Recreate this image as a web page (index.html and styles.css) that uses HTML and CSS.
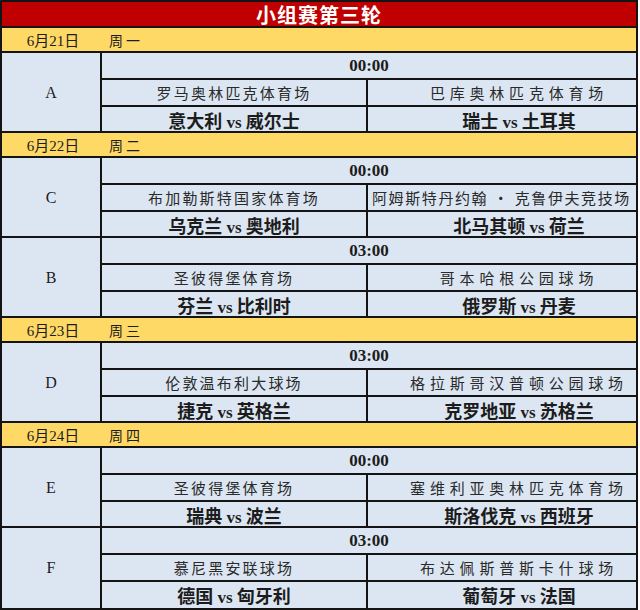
FILE: index.html
```html
<!DOCTYPE html>
<html lang="zh">
<head>
<meta charset="utf-8">
<link rel="stylesheet" href="styles.css">
</head>
<body>
<div class="sheet">
  <div class="title">小组赛第三轮</div>

  <div class="date"><span class="d">6月21日</span><span class="w">周一</span></div>
  <div class="group">
    <div class="letter">A</div>
    <div class="games">
      <div class="time">00:00</div>
      <div class="pair vrow"><div class="venue">罗马奥林匹克体育场</div><div class="venue r">巴库奥林匹克体育场</div></div>
      <div class="pair mrow"><div class="match"><span>意大利 <b>vs</b> 威尔士</span></div><div class="match r"><span>瑞士 <b>vs</b> 土耳其</span></div></div>
    </div>
  </div>

  <div class="date"><span class="d">6月22日</span><span class="w">周二</span></div>
  <div class="group">
    <div class="letter">C</div>
    <div class="games">
      <div class="time">00:00</div>
      <div class="pair vrow"><div class="venue">布加勒斯特国家体育场</div><div class="venue r tight">阿姆斯特丹约翰 · 克鲁伊夫竞技场</div></div>
      <div class="pair mrow"><div class="match"><span>乌克兰 <b>vs</b> 奥地利</span></div><div class="match r"><span>北马其顿 <b>vs</b> 荷兰</span></div></div>
    </div>
  </div>
  <div class="group">
    <div class="letter">B</div>
    <div class="games">
      <div class="time">03:00</div>
      <div class="pair vrow"><div class="venue">圣彼得堡体育场</div><div class="venue r">哥本哈根公园球场</div></div>
      <div class="pair mrow"><div class="match"><span>芬兰 <b>vs</b> 比利时</span></div><div class="match r"><span>俄罗斯 <b>vs</b> 丹麦</span></div></div>
    </div>
  </div>

  <div class="date"><span class="d">6月23日</span><span class="w">周三</span></div>
  <div class="group">
    <div class="letter">D</div>
    <div class="games">
      <div class="time">03:00</div>
      <div class="pair vrow"><div class="venue">伦敦温布利大球场</div><div class="venue r">格拉斯哥汉普顿公园球场</div></div>
      <div class="pair mrow"><div class="match"><span>捷克 <b>vs</b> 英格兰</span></div><div class="match r"><span>克罗地亚 <b>vs</b> 苏格兰</span></div></div>
    </div>
  </div>

  <div class="date"><span class="d">6月24日</span><span class="w">周四</span></div>
  <div class="group">
    <div class="letter">E</div>
    <div class="games">
      <div class="time">00:00</div>
      <div class="pair vrow"><div class="venue">圣彼得堡体育场</div><div class="venue r">塞维利亚奥林匹克体育场</div></div>
      <div class="pair mrow"><div class="match"><span>瑞典 <b>vs</b> 波兰</span></div><div class="match r"><span>斯洛伐克 <b>vs</b> 西班牙</span></div></div>
    </div>
  </div>
  <div class="group">
    <div class="letter">F</div>
    <div class="games">
      <div class="time">03:00</div>
      <div class="pair vrow"><div class="venue">慕尼黑安联球场</div><div class="venue r">布达佩斯普斯卡什球场</div></div>
      <div class="pair mrow"><div class="match"><span>德国 <b>vs</b> 匈牙利</span></div><div class="match r"><span>葡萄牙 <b>vs</b> 法国</span></div></div>
    </div>
  </div>
</div>
</body>
</html>
```

FILE: styles.css
```css
* { box-sizing: border-box; }
html, body { margin: 0; padding: 0; background: #ffffff; }
body {
  font-family: "Liberation Serif", "Noto Sans CJK SC", serif;
  color: #1c1c1c;
}
.sheet {
  width: 638px;
  height: 610px;
  border: 2px solid #141414;
  display: flex;
  flex-direction: column;
  overflow: hidden;
}
.title {
  flex: none;
  height: 26px;
  background: #c00000;
  color: #ffffff;
  font-family: "Noto Sans CJK SC", sans-serif;
  font-weight: 700;
  font-size: 20px;
  letter-spacing: 1px;
  display: flex;
  align-items: center;
  justify-content: center;
  border-bottom: 2px solid #141414;
}
.date {
  flex: none;
  height: 25px;
  background: #ffd966;
  border-bottom: 2px solid #141414;
  display: grid;
  grid-template-columns: 102px 1fr;
  align-items: center;
  font-size: 15px;
}
.date .d { text-align: center; }
.date .w {
  padding-left: 5px;
  font-family: "Noto Sans CJK SC", sans-serif;
  font-size: 14px;
  letter-spacing: 3px;
}
.group {
  flex: none;
  height: 80px;
  display: grid;
  grid-template-columns: 100px 1fr;
  background: #dce6f2;
  border-bottom: 2px solid #141414;
}
.group:last-child { flex: 1; border-bottom: none; }
.letter {
  border-right: 2px solid #141414;
  display: flex;
  align-items: center;
  justify-content: center;
  font-size: 16px;
}
.games { display: flex; flex-direction: column; }
.time {
  height: 27px;
  border-bottom: 2px solid #141414;
  display: flex;
  align-items: center;
  justify-content: center;
  font-weight: 700;
  font-size: 17px;
}
.pair {
  display: grid;
  grid-template-columns: 266px 1fr;
}
.vrow { height: 27px; border-bottom: 2px solid #141414; }
.mrow { flex: 1; }
.venue, .match {
  display: flex;
  align-items: center;
  justify-content: center;
  white-space: nowrap;
}
.venue:first-child, .match:first-child { border-right: 2px solid #141414; }
.r { padding-left: 34px; }
.venue {
  font-family: "Noto Sans CJK SC", sans-serif;
  font-size: 15px;
  letter-spacing: 2.2px;
  color: #2a2a2a;
}
.venue.r { letter-spacing: 4.8px; }
.venue.r.tight { letter-spacing: 1.6px; padding-left: 4px; justify-content: flex-start; }
.match {
  font-family: "Noto Sans CJK SC", sans-serif;
  font-weight: 700;
  font-size: 18px;
}
.match b {
  font-family: "Liberation Serif", serif;
  font-weight: 700;
  font-size: 17px;
}
```
